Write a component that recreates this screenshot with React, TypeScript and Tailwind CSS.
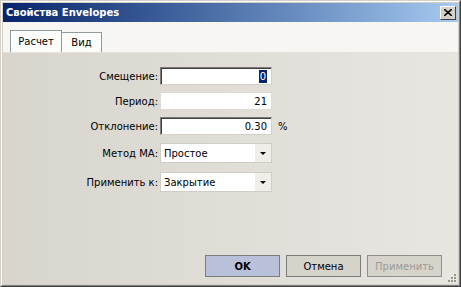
const font = { fontFamily: '"DejaVu Sans", Tahoma, sans-serif' };

function Field({ value, sunken, selected }: { value: string; sunken?: boolean; selected?: boolean }) {
  return (
    <div
      className={`w-[112px] h-[18px] bg-white flex items-center justify-end pr-[4px] text-[10px] text-black border ${
        sunken ? 'border-t-[#7a7a7a] border-l-[#7a7a7a] border-r-[#d4d0c8] border-b-[#d4d0c8] shadow-[inset_1px_1px_0_#404040]' : 'border-[#dcdad3]'
      }`}
    >
      {selected ? <span className="bg-[#0a246a] text-white px-[1px] leading-[13px]">{value}</span> : value}
    </div>
  );
}

function Combo({ value }: { value: string }) {
  return (
    <div className="w-[112px] h-[20px] bg-white border border-[#cfcdc4] flex items-stretch text-[10px] text-black">
      <div className="flex-1 flex items-center pl-[3px]">{value}</div>
      <div className="w-[16px] bg-[#efeee9] flex items-center justify-center">
        <svg width="6" height="3" viewBox="0 0 6 3">
          <path d="M0 0h6L3 3z" fill="#000" />
        </svg>
      </div>
    </div>
  );
}

export default function App() {
  const rows = [
    { label: 'Смещение:', el: <Field value="0" sunken selected />, mt: 'mt-[14px]' },
    { label: 'Период:', el: <Field value="21" />, mt: 'mt-[7px]' },
    { label: 'Отклонение:', el: <Field value="0.30" sunken />, suffix: '%', mt: 'mt-[7px]' },
    { label: 'Метод МА:', el: <Combo value="Простое" />, mt: 'mt-[8px]' },
    { label: 'Применить к:', el: <Combo value="Закрытие" />, mt: 'mt-[9px]' },
  ];

  return (
    <div
      style={font}
      className="w-[461px] h-[287px] flex flex-col bg-[#d4d0c8] border-t border-l border-t-[#d4d0c8] border-l-[#d4d0c8] border-r border-b border-r-[#404040] border-b-[#404040] overflow-hidden"
    >
      <div className="flex-1 flex flex-col border-t border-l border-t-white border-l-white border-r border-b border-r-[#808080] border-b-[#808080] p-[1px]">
        {/* Title bar */}
        <div className="h-[19px] flex items-center justify-between pl-[3px] pr-[2px] bg-gradient-to-r from-[#0a246a] to-[#a6caf0]">
          <span className="text-white font-bold text-[10px]">Свойства Envelopes</span>
          <div className="w-[16px] h-[14px] bg-[#d4d0c8] border border-t-white border-l-white border-r-[#404040] border-b-[#404040] flex items-center justify-center">
            <svg width="8" height="7" viewBox="0 0 8 7">
              <path d="M0 0l8 7M8 0L0 7" stroke="#000" strokeWidth="1.6" />
            </svg>
          </div>
        </div>

        {/* Tabs */}
        <div className="h-[30px] bg-[#f7f6f3] flex items-end pl-[7px]">
          <div className="h-[22px] w-[52px] bg-[#fcfcfb] border border-[#919b9c] border-b-0 flex items-center justify-center text-[10px] text-black">
            Расчет
          </div>
          <div className="h-[20px] w-[40px] bg-[#fbfbf9] border border-[#919b9c] border-l-0 border-b-0 flex items-center justify-center text-[10px] text-black">
            Вид
          </div>
        </div>

        {/* Body */}
        <div className="relative flex-1 flex flex-col bg-gradient-to-r from-[#d8d5cd] to-[#e8e6e1] border-t border-[#e4e2dc]">
          <div className="flex flex-col">
            {rows.map((r) => (
              <div key={r.label} className={`flex items-center ${r.mt}`}>
                <div className="w-[157px] text-right pr-[2px] text-[10px] text-black">{r.label}</div>
                {r.el}
                {r.suffix && <span className="ml-[6px] text-[10px] text-black">{r.suffix}</span>}
              </div>
            ))}
          </div>

          <div className="mt-auto flex justify-end gap-[6px] pr-[16px] pb-[7px]">
            <button className="w-[75px] h-[22px] bg-[#b9c0da] border border-[#7c7c7c] text-[10px] font-bold text-black">
              OK
            </button>
            <button className="w-[75px] h-[22px] bg-[#d6d3cb] border border-[#7c7c7c] text-[10px] text-black">
              Отмена
            </button>
            <button className="w-[75px] h-[22px] bg-[#d6d3cb] border border-[#8e8e8e] text-[10px] text-[#9a9a9a]">
              Применить
            </button>
          </div>

          {/* size grip */}
          <svg className="absolute right-[1px] bottom-[1px]" width="10" height="10" viewBox="0 0 10 10">
            <g fill="#9a978e">
              <rect x="7" y="1" width="2" height="2" />
              <rect x="4" y="4" width="2" height="2" />
              <rect x="7" y="4" width="2" height="2" />
              <rect x="1" y="7" width="2" height="2" />
              <rect x="4" y="7" width="2" height="2" />
              <rect x="7" y="7" width="2" height="2" />
            </g>
          </svg>
        </div>
      </div>
    </div>
  );
}
